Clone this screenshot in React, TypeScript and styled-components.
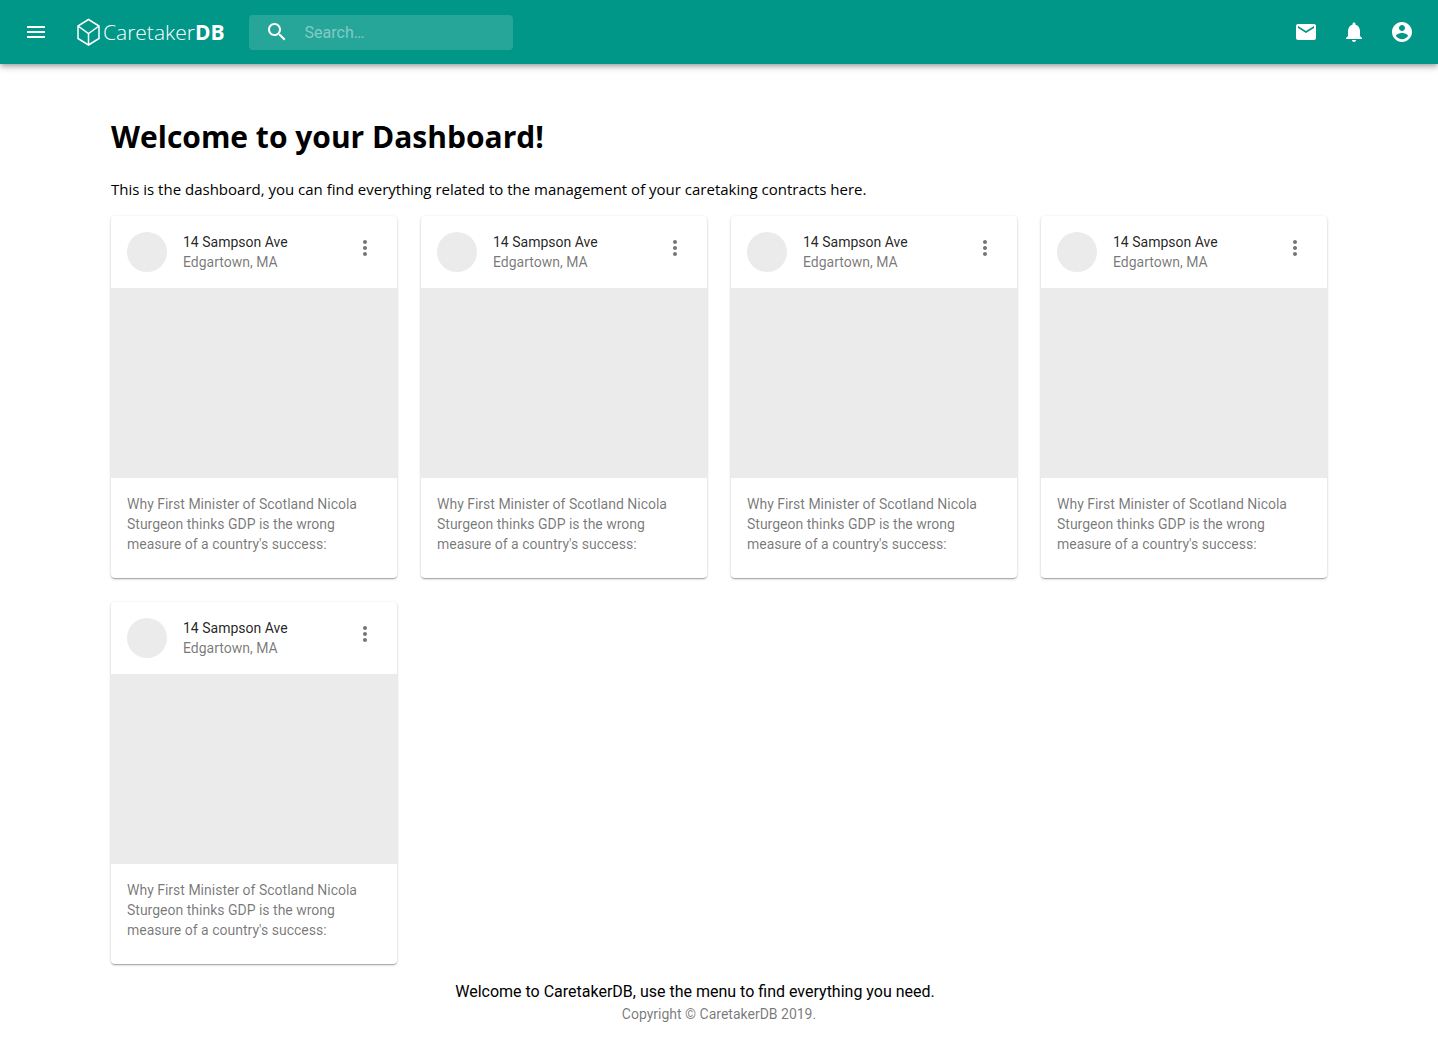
import React from 'react';
import styled, { createGlobalStyle } from 'styled-components';

const GlobalStyle = createGlobalStyle`
  *, *::before, *::after { box-sizing: border-box; }
  body {
    margin: 0;
    background: #fff;
    color: #000;
    font-family: Roboto, 'Liberation Sans', sans-serif;
    font-size: 16px;
  }
`;

const icons = {
  menu: 'M3 18h18v-2H3v2zm0-5h18v-2H3v2zm0-7v2h18V6H3z',
  search:
    'M15.5 14h-.79l-.28-.27C15.41 12.59 16 11.11 16 9.5 16 5.91 13.09 3 9.5 3S3 5.91 3 9.5 5.91 16 9.5 16c1.61 0 3.09-.59 4.23-1.57l.27.28v.79l5 4.99L20.49 19l-4.99-5zm-6 0C7.01 14 5 11.99 5 9.5S7.01 5 9.5 5 14 7.01 14 9.5 11.99 14 9.5 14z',
  mail: 'M20 4H4c-1.1 0-1.99.9-1.99 2L2 18c0 1.1.9 2 2 2h16c1.1 0 2-.9 2-2V6c0-1.1-.9-2-2-2zm0 4l-8 5-8-5V6l8 5 8-5v2z',
  bell: 'M12 22c1.1 0 2-.9 2-2h-4c0 1.1.89 2 2 2zm6-6v-5c0-3.07-1.64-5.64-4.5-6.32V4c0-.83-.67-1.5-1.5-1.5s-1.5.67-1.5 1.5v.68C7.63 5.36 6 7.92 6 11v5l-2 2v1h16v-1l-2-2z',
  account:
    'M12 2C6.48 2 2 6.48 2 12s4.48 10 10 10 10-4.48 10-10S17.52 2 12 2zm0 3c1.66 0 3 1.34 3 3s-1.34 3-3 3-3-1.34-3-3 1.34-3 3-3zm0 14.2c-2.5 0-4.71-1.28-6-3.22.03-1.99 4-3.08 6-3.08 1.99 0 5.97 1.09 6 3.08-1.29 1.94-3.5 3.22-6 3.22z',
  more: 'M12 8c1.1 0 2-.9 2-2s-.9-2-2-2-2 .9-2 2 .9 2 2 2zm0 2c-1.1 0-2 .9-2 2s.9 2 2 2 2-.9 2-2-.9-2-2-2zm0 6c-1.1 0-2 .9-2 2s.9 2 2 2 2-.9 2-2-.9-2-2-2z',
};

const Svg = styled.svg`
  display: block;
  width: 24px;
  height: 24px;
  fill: currentColor;
`;

function Icon({ name }: { name: keyof typeof icons }) {
  return (
    <Svg viewBox="0 0 24 24" aria-hidden="true">
      <path d={icons[name]} />
    </Svg>
  );
}

const IconButton = styled.button`
  flex: none;
  width: 48px;
  height: 48px;
  padding: 12px;
  border: 0;
  border-radius: 50%;
  background: transparent;
  color: inherit;
  cursor: pointer;

  &:hover { background: rgba(0, 0, 0, 0.04); }
`;

const AppBar = styled.header`
  position: sticky;
  top: 0;
  z-index: 1;
  display: flex;
  align-items: center;
  height: 64px;
  padding: 0 12px;
  background: #009688;
  color: #fff;
  box-shadow: 0 2px 4px -1px rgba(0, 0, 0, 0.2), 0 4px 5px 0 rgba(0, 0, 0, 0.14),
    0 1px 10px 0 rgba(0, 0, 0, 0.12);
`;

const Logo = styled.a`
  display: flex;
  align-items: center;
  gap: 1px;
  margin: 0 24px 0 16px;
  color: inherit;
  font-family: 'Open Sans', 'Noto Sans', sans-serif;
  font-size: 21px;
  font-weight: 300;
  line-height: 28px;
  text-decoration: none;

  strong { font-weight: 700; }
`;

const Cube = styled.svg`
  width: 26px;
  height: 28px;
  fill: none;
  stroke: currentColor;
  stroke-width: 1.5;
`;

const Search = styled.label`
  display: flex;
  align-items: center;
  width: 264px;
  height: 35px;
  padding: 0 8px 0 16px;
  gap: 16px;
  border-radius: 4px;
  background: rgba(255, 255, 255, 0.15);
`;

const SearchInput = styled.input`
  flex: 1;
  min-width: 0;
  padding: 0;
  border: 0;
  outline: 0;
  background: transparent;
  color: inherit;
  font: inherit;

  &::placeholder { color: inherit; opacity: 0.42; }
`;

const Actions = styled.nav`
  display: flex;
  margin-left: auto;
`;

const Main = styled.main`
  max-width: 1280px;
  margin: 0 auto;
  padding: 51px 32px 16px;
`;

const Title = styled.h1`
  margin: 0 0 21px;
  font: 700 30px/43px 'Open Sans', 'Noto Sans', sans-serif;
`;

const Intro = styled.p`
  margin: 0 0 16px;
  font: 400 15px/21px 'Open Sans', 'Noto Sans', sans-serif;
`;

const Grid = styled.div`
  display: grid;
  grid-template-columns: repeat(4, 1fr);
  gap: 24px;
`;

const Card = styled.article`
  overflow: hidden;
  border-radius: 4px;
  background: #fff;
  box-shadow: 0 1px 3px 0 rgba(0, 0, 0, 0.2), 0 1px 1px 0 rgba(0, 0, 0, 0.14),
    0 2px 1px -1px rgba(0, 0, 0, 0.12);
  font-size: 14px;
  line-height: 20px;
  color: rgba(0, 0, 0, 0.54);
`;

const CardHeader = styled.header`
  display: flex;
  align-items: center;
  gap: 16px;
  height: 72px;
  padding: 8px 8px 8px 16px;
`;

const Avatar = styled.div`
  flex: none;
  width: 40px;
  height: 40px;
  border-radius: 50%;
  background: #ebebeb;
`;

const Heading = styled.div`
  flex: 1;
`;

const Address = styled.h2`
  margin: 0;
  font: inherit;
  color: rgba(0, 0, 0, 0.87);
`;

const CardMenu = styled(IconButton)`
  align-self: flex-start;
`;

const Media = styled.div`
  height: 190px;
  background: #ebebeb;
`;

const CardText = styled.p`
  margin: 0;
  padding: 16px 16px 24px;
`;

const Footer = styled.footer`
  text-align: center;
`;

const Welcome = styled.p`
  margin: 0;
  padding-right: 48px;
  line-height: 24px;
`;

const Copyright = styled.p`
  margin: 0;
  font-size: 14px;
  line-height: 20px;
  color: rgba(0, 0, 0, 0.54);
`;

const properties = Array.from({ length: 5 }, (_, id) => ({
  id,
  street: '14 Sampson Ave',
  town: 'Edgartown, MA',
  text: "Why First Minister of Scotland Nicola Sturgeon thinks GDP is the wrong measure of a country's success:",
}));

export default function App() {
  return (
    <>
      <GlobalStyle />
      <AppBar>
        <IconButton aria-label="Open menu"><Icon name="menu" /></IconButton>
        <Logo href="#">
          <Cube viewBox="0 0 26 28" aria-hidden="true">
            <path d="M12.5 1.5 23 8v12.5L12.5 27 2 20.5V8z M2 8l10.5 7.5L23 8M12.5 15.5V27" />
          </Cube>
          <span>Caretaker<strong>DB</strong></span>
        </Logo>
        <Search>
          <Icon name="search" />
          <SearchInput type="text" placeholder="Search…" aria-label="Search" />
        </Search>
        <Actions>
          <IconButton aria-label="Mail"><Icon name="mail" /></IconButton>
          <IconButton aria-label="Notifications"><Icon name="bell" /></IconButton>
          <IconButton aria-label="Account"><Icon name="account" /></IconButton>
        </Actions>
      </AppBar>
      <Main>
        <Title>Welcome to your Dashboard!</Title>
        <Intro>
          This is the dashboard, you can find everything related to the management of your caretaking contracts here.
        </Intro>
        <Grid>
          {properties.map((p) => (
            <Card key={p.id}>
              <CardHeader>
                <Avatar />
                <Heading>
                  <Address>{p.street}</Address>
                  <div>{p.town}</div>
                </Heading>
                <CardMenu aria-label="Property options"><Icon name="more" /></CardMenu>
              </CardHeader>
              <Media />
              <CardText>{p.text}</CardText>
            </Card>
          ))}
        </Grid>
      </Main>
      <Footer>
        <Welcome>Welcome to CaretakerDB, use the menu to find everything you need.</Welcome>
        <Copyright>Copyright © CaretakerDB 2019.</Copyright>
      </Footer>
    </>
  );
}
